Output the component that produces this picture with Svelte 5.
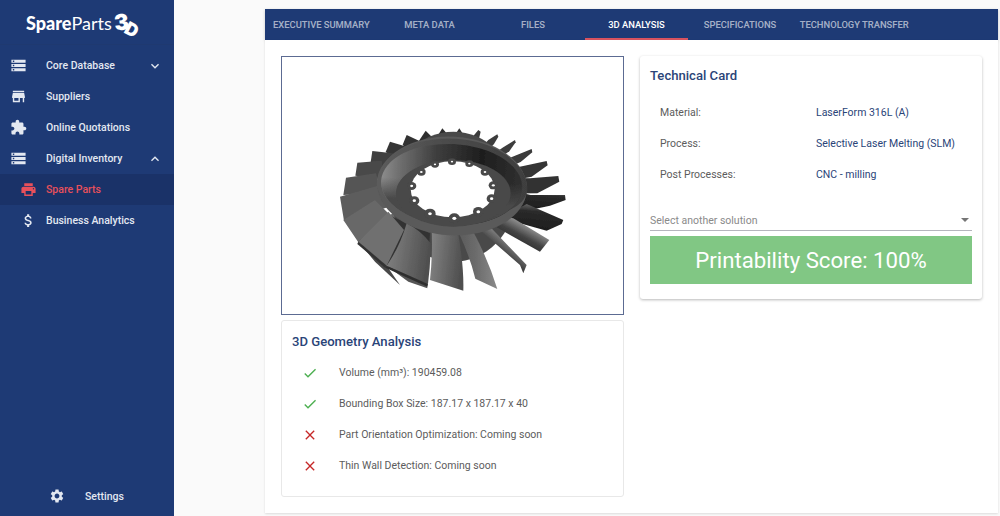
<script>
  const P = {
    storage: 'M2 20h20v-4H2v4zm2-3h2v2H4v-2zM2 4v4h20V4H2zm4 3H4V5h2v2zm-4 7h20v-4H2v4zm2-3h2v2H4v-2z',
    store: 'M20 4H4v2h16V4zm1 10v-2l-1-5H4l-1 5v2h1v6h10v-6h4v6h2v-6h1zm-9 4H6v-4h6v4z',
    ext: 'M20.5 11H19V7c0-1.1-.9-2-2-2h-4V3.5C13 2.12 11.88 1 10.5 1S8 2.12 8 3.5V5H4c-1.1 0-1.99.9-1.99 2v3.8H3.5c1.49 0 2.7 1.21 2.7 2.7s-1.21 2.7-2.7 2.7H2V20c0 1.1.9 2 2 2h3.8v-1.5c0-1.49 1.21-2.7 2.7-2.7 1.49 0 2.7 1.21 2.7 2.7V22H17c1.1 0 2-.9 2-2v-4h1.5c1.38 0 2.5-1.12 2.5-2.5S21.88 11 20.5 11z',
    print: 'M19 8H5c-1.66 0-3 1.34-3 3v6h4v4h12v-4h4v-6c0-1.66-1.34-3-3-3zm-3 11H8v-5h8v5zm3-7c-.55 0-1-.45-1-1s.45-1 1-1 1 .45 1 1-.45 1-1 1zm-1-9H6v4h12V3z',
    money: 'M11.8 10.9c-2.27-.59-3-1.2-3-2.15 0-1.09 1.01-1.85 2.7-1.85 1.78 0 2.44.85 2.5 2.1h2.21c-.07-1.72-1.12-3.3-3.21-3.81V3h-3v2.16c-1.94.42-3.5 1.68-3.5 3.61 0 2.31 1.91 3.46 4.7 4.13 2.5.6 3 1.48 3 2.41 0 .69-.49 1.79-2.7 1.79-2.06 0-2.87-.92-2.98-2.1h-2.2c.12 2.19 1.76 3.42 3.68 3.83V21h3v-2.15c1.95-.37 3.5-1.5 3.5-3.55 0-2.84-2.43-3.81-4.7-4.4z',
    gear: 'M19.14 12.94c.04-.3.06-.61.06-.94 0-.32-.02-.64-.07-.94l2.03-1.58c.18-.14.23-.41.12-.61l-1.92-3.32c-.12-.22-.37-.29-.59-.22l-2.39.96c-.5-.38-1.03-.7-1.62-.94l-.36-2.54c-.04-.24-.24-.41-.48-.41h-3.84c-.24 0-.43.17-.47.41l-.36 2.54c-.59.24-1.13.57-1.62.94l-2.39-.96c-.22-.08-.47 0-.59.22L2.74 8.87c-.12.21-.08.47.12.61l2.03 1.58c-.05.3-.09.63-.09.94s.02.64.07.94l-2.03 1.58c-.18.14-.23.41-.12.61l1.92 3.32c.12.22.37.29.59.22l2.39-.96c.5.38 1.03.7 1.62.94l.36 2.54c.05.24.24.41.48.41h3.84c.24 0 .44-.17.47-.41l.36-2.54c.59-.24 1.13-.56 1.62-.94l2.39.96c.22.08.47 0 .59-.22l1.92-3.32c.12-.22.07-.47-.12-.61l-2.01-1.58zM12 15.6c-1.98 0-3.6-1.62-3.6-3.6s1.62-3.6 3.6-3.6 3.6 1.62 3.6 3.6-1.62 3.6-3.6 3.6z',
    more: 'M16.59 8.59L12 13.17 7.41 8.59 6 10l6 6 6-6z',
    less: 'M12 8l-6 6 1.41 1.41L12 10.83l4.59 4.58L18 14z',
    check: 'M9 16.17L4.83 12l-1.42 1.41L9 19 21 7l-1.41-1.41z',
    close: 'M19 6.41L17.59 5 12 10.59 6.41 5 5 6.41 10.59 12 5 17.59 6.41 19 12 13.41 17.59 19 19 17.59 13.41 12z'
  };
  const nav = [
    { label: 'Core Database', icon: 'storage', chev: 'more' },
    { label: 'Suppliers', icon: 'store' },
    { label: 'Online Quotations', icon: 'ext' },
    { label: 'Digital Inventory', icon: 'storage', chev: 'less' },
    { label: 'Spare Parts', icon: 'print', sub: true, active: true },
    { label: 'Business Analytics', icon: 'money', sub: true }
  ];
  const tabs = ['Executive Summary', 'Meta Data', 'Files', '3D Analysis', 'Specifications', 'Technology Transfer'];
  const tech = [
    ['Material:', 'LaserForm 316L (A)'],
    ['Process:', 'Selective Laser Melting (SLM)'],
    ['Post Processes:', 'CNC - milling']
  ];
  const geo = [
    ['check', 'Volume (mm³): 190459.08'],
    ['check', 'Bounding Box Size: 187.17 x 187.17 x 40'],
    ['close', 'Part Orientation Optimization: Coming soon'],
    ['close', 'Thin Wall Detection: Coming soon']
  ];
  // Continue a blade's outline towards the hub without narrowing it, so its root stays under the rim
  function blade(pts) {
    const p = pts.split(' ').map((s) => s.split(',').map(Number));
    const a = p[0], b = p[p.length - 1];
    const dx = (396 - (a[0] + b[0]) / 2) * 0.5, dy = (228 - (a[1] + b[1]) / 2) * 0.5;
    const tail = [[b[0] + dx, b[1] + dy], [a[0] + dx, a[1] + dy]];
    return [...p, ...tail].map((q) => q.join(',')).join(' ');
  }
  const teeth = [
    ['400,82 418,55 434,80', '#333'],
    ['347,87 367,55 390,82', '#2e2e2e'],
    ['297,92 317,62 342,87', '#2e2e2e'],
    ['248,104 260,75 300,94', '#303030'],
    ['197,126 210,95 253,108', '#363636'],
    ['152,157 157,123 218,130', '#404040'],
    ['106,197 112,158 185,152 190,190', '#4a4a4a'],
    ['70,255 78,203 168,190 180,235', '#555'],
    ['72,332 60,260 178,226 195,285', '#5d5d5d'],
    ['115,397 70,330 165,270 210,315', '#686868'],
    ['455,84 475,60 482,65 476,90', '#3a3a3a'],
    ['505,90 532,73 535,80 522,102', '#3c3c3c'],
    ['550,112 585,90 587,97 568,124', '#3c3c3c'],
    ['585,137 635,117 637,127 602,156', '#3a3a3a'],
    ['610,168 680,153 683,166 635,200', '#353535'],
    ['630,205 715,198 718,215 652,250', '#333']
  ].map(([pts, c]) => [blade(pts), c]);
  const holes = [
    [330, 311, 15, 4.5], [403, 325, 15, 5], [475, 305, 14, 4.5], [515, 266, 13, 4], [520, 226, 12, 3.5],
    [495, 186, 11, 3], [448, 161, 10, 2.5], [396, 155, 10, 2.5], [345, 163, 10, 2.5], [304, 186, 11, 3],
    [275, 228, 12, 3.5], [283, 272, 13, 4]
  ];
</script>

{#snippet icon(name, size)}
  <svg class="ic" width={size} height={size} viewBox="0 0 24 24" fill="currentColor"><path d={P[name]} /></svg>
{/snippet}

<div class="page">
  <aside class="side">
    <div class="logo">
      <span class="lg-b">Spare</span><span class="lg-l">Parts</span><span class="three">3</span><span class="dee">D</span>
    </div>
    <nav class="nav">
      {#each nav as n}
        <div class="row" class:sub={n.sub} class:active={n.active}>
          <span class="ico">{@render icon(n.icon, 17)}</span>
          <span class="lab">{n.label}</span>
          {#if n.chev}<span class="chev">{@render icon(n.chev, 16)}</span>{/if}
        </div>
      {/each}
    </nav>
    <div class="settings">
      {@render icon('gear', 16)}
      <span>Settings</span>
    </div>
  </aside>

  <main class="main">
    <div class="tabs">
      {#each tabs as t}
        <div class="tab" class:on={t === '3D Analysis'}>{t}</div>
      {/each}
    </div>
    <div class="panel">
      <div class="left">
        <div class="viewer">
          <svg class="part" viewBox="282 57 341 257" width="341" height="257">
            <defs>
              <filter id="soft" x="-5%" y="-5%" width="110%" height="110%"><feGaussianBlur stdDeviation="0.45" /></filter>
              <linearGradient id="top" x1="0" y1="0.5" x2="1" y2="0.5">
                <stop offset="0" stop-color="#5c5c5c" /><stop offset="0.5" stop-color="#4a4a4a" />
                <stop offset="1" stop-color="#3e3e3e" />
              </linearGradient>
              <linearGradient id="wall" x1="0" y1="0.5" x2="1" y2="0.5">
                <stop offset="0" stop-color="#8c8c8c" /><stop offset="0.12" stop-color="#707070" />
                <stop offset="0.38" stop-color="#3e3e3e" /><stop offset="0.7" stop-color="#1e1e1e" />
                <stop offset="1" stop-color="#303030" />
              </linearGradient>
              <linearGradient id="fade" x1="0" y1="0" x2="0" y2="1">
                <stop offset="0.45" stop-color="#484848" stop-opacity="0" />
                <stop offset="0.72" stop-color="#484848" stop-opacity="1" />
              </linearGradient>
              <linearGradient id="bl" x1="0" y1="0" x2="1" y2="0.2">
                <stop offset="0" stop-color="#858585" /><stop offset="0.55" stop-color="#686868" />
                <stop offset="1" stop-color="#505050" />
              </linearGradient>
              <linearGradient id="bl2" x1="0" y1="0" x2="1" y2="0">
                <stop offset="0" stop-color="#5a5a5a" /><stop offset="0.5" stop-color="#6e6e6e" />
                <stop offset="1" stop-color="#8a8a8a" />
              </linearGradient>
              <linearGradient id="rod" x1="0.25" y1="0.8" x2="0.75" y2="0.2">
                <stop offset="0" stop-color="#222" /><stop offset="0.45" stop-color="#444" />
                <stop offset="0.8" stop-color="#8c8c8c" /><stop offset="1" stop-color="#5c5c5c" />
              </linearGradient>
              <linearGradient id="rodd" x1="0.4" y1="1" x2="0.6" y2="0">
                <stop offset="0" stop-color="#1c1c1c" /><stop offset="0.72" stop-color="#2a2a2a" />
                <stop offset="1" stop-color="#6c6c6c" />
              </linearGradient>
            </defs>
            <g transform="translate(320 110) scale(0.3333)" filter="url(#soft)">
              {#each teeth as [pts, c]}
                <polygon points={pts} fill={c} />
              {/each}
              <polygon points="115,395 200,467 240,525 165,455" fill="#4a4a4a" />
              <polygon points="200,467 322,510 322,535 265,515" fill="#575757" />
              <ellipse cx="400" cy="260" rx="185" ry="195" fill="#4a4a4a" />
              <polygon points="115,395 200,467 322,510 330,370 205,315" fill="#333" />
              <polygon points="632,255 735,255 737,270 690,287 640,298 560,290 570,240" fill="url(#rodd)" />
              <polygon points="605,290 620,282 730,330 725,342 680,362 600,340 540,330" fill="url(#rodd)" />
              <polygon points="542,340 562,322 580,325 688,390 660,425 530,352" fill="url(#rod)" />
              <polygon points="470,352 500,340 620,465 610,490 600,465" fill="url(#rod)" />
              <path d="M415 365 L460 365 Q505 450 532 537 L466 506 Q450 440 415 365Z" fill="url(#bl2)" />
              <path d="M335 360 L415 375 Q432 470 430 542 L330 510 Q338 440 335 360Z" fill="url(#bl)" />
              <path d="M260 340 Q300 360 332 400 Q332 460 324 522 L200 467 Q240 410 260 340Z" fill="url(#bl)" />
              <polygon points="115,395 205,305 252,360 200,467" fill="#707070" />
              <polygon points="200,467 324,522 322,530 196,473" fill="#2e2e2e" />
              <polygon points="115,395 200,467 195,473 112,402" fill="#333" />
              <ellipse cx="396" cy="228" rx="225" ry="148" transform="rotate(3 396 228)" fill="#5a5a5a" />
              <path d="M171 228 A225 142 3 0 1 621 228 A225 100 3 0 1 171 228Z" fill="url(#top)" />
              <ellipse cx="395" cy="224" rx="212" ry="122" transform="rotate(3 395 224)" fill="url(#wall)" />
              <ellipse cx="395" cy="224" rx="212" ry="122" transform="rotate(3 395 224)" fill="url(#fade)" />
              <ellipse cx="400" cy="250" rx="172" ry="100" fill="#484848" />
              <ellipse cx="398" cy="238" rx="126" ry="84" fill="#fff" />
              {#each holes as [x, y, r, h]}
                <ellipse cx={x} cy={y} rx={r + 2} ry={r} fill="#484848" />
                <ellipse cx={x} cy={y} rx={h + 1} ry={h} fill="#fff" />
              {/each}
            </g>
          </svg>
        </div>
        <section class="card geo">
          <h3>3D Geometry Analysis</h3>
          {#each geo as [k, text]}
            <div class="geo-row">
              <span class="geo-ic {k}">{@render icon(k, 16)}</span>
              <span>{text}</span>
            </div>
          {/each}
        </section>
      </div>
      <section class="card techcard">
        <h3>Technical Card</h3>
        <div class="tech">
          {#each tech as [a, b]}
            <div class="tech-row"><span class="ta">{a}</span><span class="tb">{b}</span></div>
          {/each}
        </div>
        <div class="select">
          <span>Select another solution</span>
          <span class="caret"></span>
        </div>
        <div class="score">Printability Score: 100%</div>
      </section>
    </div>
  </main>
</div>

<style>
  :global(body) { margin: 0; background: #fafafa; }
  .page {
    display: flex; width: 1000px; height: 516px; overflow: hidden;
    font-family: Roboto, "Liberation Sans", sans-serif; background: #fafafa;
  }
  .side {
    width: 174px; flex: none; background: #1e3a75; color: #fff;
    display: flex; flex-direction: column; box-sizing: border-box;
  }
  .logo {
    height: 45px; padding: 12px 0 0 26px; box-sizing: border-box; white-space: nowrap;
    font-family: Lato, sans-serif; font-size: 18px; line-height: 20px; color: #fff;
    border-bottom: 1px solid #1f3970; margin-bottom: 5px;
  }
  .lg-b { font-weight: 900; }
  .lg-l { font-weight: 400; }
  .three, .dee { display: inline-block; font-family: Inter, sans-serif; font-weight: 900; }
  .three { font-size: 22px; transform: rotate(-6deg); margin-left: 2px; }
  .dee { font-size: 18px; transform: translateY(6px) rotate(28deg); margin-left: -3px; }
  .nav { display: flex; flex-direction: column; }
  .row { display: flex; align-items: center; height: 31px; font-size: 10.5px; font-weight: 500; color: #e3e8f1; }
  .ico { width: 46px; padding-left: 10px; box-sizing: border-box; display: flex; flex: none; }
  .sub .ico { padding-left: 20px; }
  .ic { display: block; }
  .lab { flex: 1; }
  .chev { margin-right: 11px; }
  .active { background: #1a3268; color: #e8505b; }
  .settings {
    margin-top: auto; height: 40px; display: flex; align-items: center; gap: 20px;
    padding-left: 49px; font-size: 10.5px; font-weight: 500; color: #e3e8f1;
  }
  .main { flex: 1; padding: 9px 2px 3px 91px; min-width: 0; display: flex; flex-direction: column; }
  .tabs { height: 31px; flex: none; background: #1e3a75; display: flex; box-shadow: 0 1px 3px rgba(0,0,0,.2); }
  .tab {
    min-width: 103.5px; padding: 0 8px; box-sizing: border-box; text-align: center; line-height: 31px;
    font-size: 9.4px; font-weight: 500; text-transform: uppercase; color: rgba(255,255,255,.62);
    border-bottom: 2px solid transparent; height: 31px; white-space: nowrap;
  }
  .tab.on { color: #fff; border-bottom-color: #d9535f; }
  .panel {
    flex: 1; background: #fff; display: grid; grid-template-columns: 343px 342px; gap: 16px;
    padding: 16px; align-items: start; box-shadow: 0 1px 2px rgba(0,0,0,.12);
  }
  .left { display: flex; flex-direction: column; gap: 5px; }
  .viewer { height: 259px; box-sizing: border-box; border: 1px solid #5c6b92; background: #fff; }
  .part { display: block; }
  .card { background: #fff; border-radius: 3px; box-sizing: border-box; }
  h3 { margin: 0; font-size: 13.1px; font-weight: 500; color: #2a4478; line-height: 20px; }
  .geo { height: 177px; border: 1px solid #e8e8e8; padding: 11px 10px 0; }
  .geo h3 { margin-bottom: 5px; }
  .geo-row { display: flex; align-items: center; height: 31px; font-size: 10.5px; color: #5c5c5c; }
  .geo-ic { width: 47px; padding-left: 10px; box-sizing: border-box; flex: none; display: flex; }
  .geo-ic.check { color: #4caf50; }
  .geo-ic.close { color: #c62828; }
  .techcard { height: 243px; padding: 10px 10px 0; box-shadow: 0 1px 3px rgba(0,0,0,.28); }
  .techcard h3 { margin-bottom: 11px; }
  .tech-row { display: flex; align-items: center; height: 31px; font-size: 10.5px; padding-left: 10px; }
  .ta { width: 156px; color: #5c5c5c; }
  .tb { color: #2a4478; }
  .select {
    margin-top: 20px; height: 20px; border-bottom: 1px solid #b5b5bd; display: flex; align-items: center;
    justify-content: space-between; font-size: 10.5px; color: #8a8a8a; padding-right: 3px;
  }
  .caret { width: 0; height: 0; border: 4px solid transparent; border-top-color: #757575; border-bottom: 0; }
  .score {
    margin-top: 5px; height: 48px; background: #81c784; color: #fff; text-align: center;
    line-height: 48px; font-size: 22.2px;
  }
</style>
